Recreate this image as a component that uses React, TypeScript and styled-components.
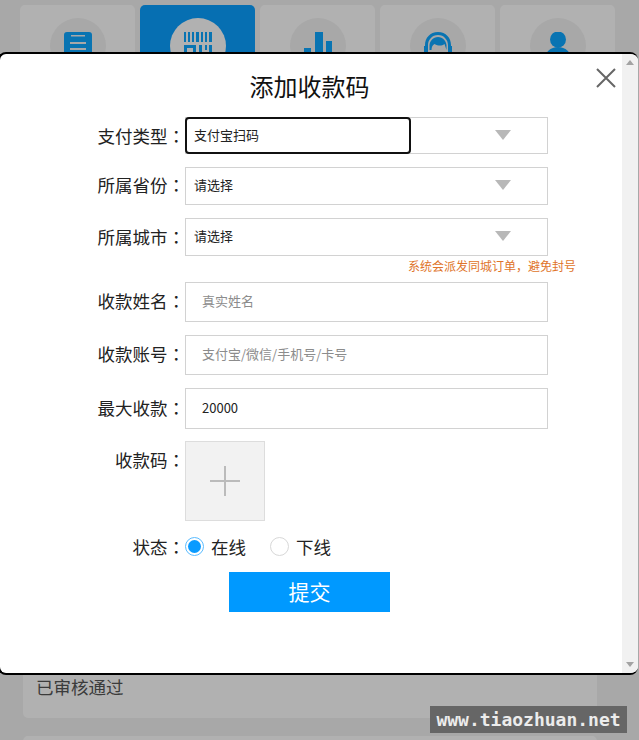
import React from "react";
import styled, { createGlobalStyle } from "styled-components";

const GlobalStyle = createGlobalStyle`
  html, body {
    margin: 0;
    padding: 0;
    height: 100%;
    overflow: hidden;
    background: #f1f1f1;
    font-family: "Noto Sans CJK SC", "Liberation Sans", sans-serif;
    color: #222;
  }
`;

const Page = styled.div`
  position: relative;
  width: 639px;
  height: 740px;
  overflow: hidden;
  box-sizing: border-box;
  padding: 5px 0 0 20px;
`;

const Tabs = styled.div`
  display: grid;
  grid-template-columns: repeat(5, 115px);
  gap: 5px;
`;

const Tab = styled.div<{ $active?: boolean }>`
  height: 110px;
  display: flex;
  justify-content: center;
  padding-top: 13px;
  box-sizing: border-box;
  border-radius: 5px;
  background: ${(p) => (p.$active ? "#0a9fff" : "#fefefe")};
`;

const Circle = styled.div<{ $active?: boolean }>`
  width: 56px;
  height: 56px;
  border-radius: 50%;
  display: flex;
  justify-content: center;
  padding-top: 14px;
  box-sizing: border-box;
  background: ${(p) => (p.$active ? "#fefefe" : "#f1f1f1")};
  color: #0ea6ff;
`;

const Card = styled.div`
  margin: 10px 0 0 3px;
  width: 574px;
  height: 593px;
  box-sizing: border-box;
  background: #fefefe;
  border-radius: 5px;
  display: flex;
  flex-direction: column;
  justify-content: flex-end;
  padding: 0 13px 18px;
  font-size: 17.5px;
  line-height: 26px;
  color: #555;
`;

const NextCard = styled(Card)`
  margin-top: 18px;
  height: 60px;
`;

const Shade = styled.div`
  position: absolute;
  inset: 0;
  background: rgba(0, 0, 0, 0.3);
`;

const Modal = styled.div`
  position: absolute;
  left: -2px;
  top: 52px;
  width: 640px;
  height: 623px;
  box-sizing: border-box;
  display: flex;
  background: #fff;
  border: 2px solid #000;
  border-right: 0;
  border-radius: 8px;
  overflow: hidden;
`;

const Body = styled.div`
  position: relative;
  flex: 1;
  padding-top: 15px;
`;

const Title = styled.h2`
  margin: 0 0 14px;
  height: 34px;
  font-size: 24px;
  line-height: 34px;
  font-weight: 400;
  text-align: center;
  color: #111;
  padding-right: 3px;
`;

const Close = styled.button`
  position: absolute;
  right: 5px;
  top: 13px;
  width: 22px;
  height: 22px;
  padding: 0;
  border: 0;
  background: none;
  color: #666;
`;

const Row = styled.div<{ $top?: number }>`
  display: flex;
  margin-top: ${(p) => p.$top ?? 13}px;
`;

const Label = styled.label<{ $h: number }>`
  width: 185px;
  flex: none;
  font-size: 17.5px;
  line-height: ${(p) => p.$h}px;
  text-align: right;
  color: #222;
`;

// the colon sits centred in its cell in the reference, as the TC glyph does
const Colon = styled.span`
  font-family: "Noto Sans CJK TC", sans-serif;
`;

const Field = styled.div<{ $h: number }>`
  width: 363px;
  height: ${(p) => p.$h}px;
  box-sizing: border-box;
  border: 1px solid #d2d2d2;
  display: flex;
  align-items: center;
  font-size: 13px;
  color: #222;
`;

const Focused = styled.div`
  align-self: stretch;
  margin: -1px 0 -1px -1px;
  width: 226px;
  box-sizing: border-box;
  border: 2px solid #111;
  border-radius: 4px;
  display: flex;
  align-items: center;
  padding: 0 0 2px 7px;
`;

const Value = styled.span`
  padding: 0 0 3px 8px;
`;

const Arrow = styled.i`
  margin: -2px 36px 0 auto;
  width: 0;
  height: 0;
  border-style: solid;
  border-width: 10px 8px 0;
  border-color: #b8b8b8 transparent transparent;
`;

const Hint = styled.div`
  height: 26px;
  width: 576px;
  box-sizing: border-box;
  text-align: right;
  font-size: 12px;
  line-height: 20px;
  color: #e0742a;
`;

const Input = styled.input<{ $h: number }>`
  width: 363px;
  height: ${(p) => p.$h}px;
  box-sizing: border-box;
  border: 1px solid #d2d2d2;
  padding: 0 16px 3px;
  font: 13px "Noto Sans CJK SC", "Liberation Sans", sans-serif;
  color: #222;
  outline: none;
  &::placeholder {
    color: #8c8c8c;
    opacity: 1;
  }
`;

const Upload = styled.div`
  width: 80px;
  height: 80px;
  box-sizing: border-box;
  border: 1px solid #ddd;
  background: #f2f2f2;
  display: flex;
  align-items: center;
  justify-content: center;
  color: #bbb;
`;

const RadioGroup = styled.div`
  display: flex;
  align-items: center;
  height: 28px;
  padding-bottom: 1px;
  box-sizing: border-box;
  font-size: 17.5px;
  line-height: 24px;
  color: #222;
`;

const Radio = styled.span<{ $on?: boolean; $gap?: number }>`
  width: 19px;
  height: 19px;
  margin-left: ${(p) => p.$gap ?? 0}px;
  margin-right: 7px;
  border-radius: 50%;
  box-sizing: border-box;
  border: 1px solid ${(p) => (p.$on ? "#5bbcff" : "#d8d8d8")};
  display: flex;
  align-items: center;
  justify-content: center;
  &::after {
    content: "";
    width: 13px;
    height: 13px;
    border-radius: 50%;
    background: ${(p) => (p.$on ? "#0a9bff" : "transparent")};
  }
`;

const Submit = styled.button`
  display: block;
  margin: 11px 0 0 229px;
  width: 161px;
  height: 40px;
  padding: 0 0 2px;
  border: 0;
  background: #0099ff;
  color: #fff;
  font: 21px "Noto Sans CJK SC", "Liberation Sans", sans-serif;
`;

const ScrollBar = styled.div`
  width: 16px;
  flex: none;
  background: #f1f1f1;
  display: flex;
  flex-direction: column;
  justify-content: space-between;
  align-items: center;
  padding: 6px 0;
  box-sizing: border-box;
`;

const ScrollArrow = styled.i<{ $down?: boolean }>`
  width: 0;
  height: 0;
  border-style: solid;
  border-width: ${(p) => (p.$down ? "5px 4px 0" : "0 4px 5px")};
  border-color: ${(p) =>
    p.$down
      ? "#a3a3a3 transparent transparent"
      : "transparent transparent #a3a3a3"};
`;

const Watermark = styled.div`
  position: absolute;
  left: 430px;
  top: 706px;
  width: 197px;
  height: 27px;
  background: #666;
  color: #ececec;
  font: bold 18px/27px "DejaVu Sans Mono", monospace;
  text-align: center;
  white-space: nowrap;
`;

const ClipboardIcon = () => (
  <svg width="28" height="42" viewBox="0 0 28 42" fill="currentColor">
    <rect width="28" height="42" rx="3" />
    <path d="M7 3h14v1.500H7zM6 10h16v2H6zM6 16h16v2H6z" fill="#f1f1f1" />
  </svg>
);

const BarcodeIcon = () => (
  <svg width="28" height="42" viewBox="0 0 28 42" fill="currentColor">
    <path d="M0 0h2v10H0zM4 0h2v10H4zM8 0h2v10H8zM12 0h3v10h-3zM17 0h2v10h-2zM21 0h2v10h-2zM25 0h3v10h-3z" />
    <path d="M0 13h12v12H0zm3 3v6h6v-6zM15 13h3v8h-3zM21 13h2v5h-2zM25 13h3v12h-3z" fillRule="evenodd" />
  </svg>
);

const BarsIcon = () => (
  <svg width="28" height="42" viewBox="0 0 28 42" fill="currentColor">
    <path d="M0 16h7v26H0zM11 0h8v42h-8zM22 9h6v33h-6z" />
  </svg>
);

const HeadsetIcon = () => (
  <svg width="28" height="42" viewBox="0 0 28 42" fill="currentColor">
    <path d="M14 0C6 0 1 6 1 13v1h3v-1C4 8 8 3 14 3s10 5 10 10v1h3v-1C27 6 22 0 14 0z" />
    <path d="M0 14h4v8H0zM24 14h4v8h-4z" />
    <path d="M14 5C9 5 6 9 5.500 13v5l2 0c0-3 1-5 3-6 4 2 7 2 10 0l2 6V13C22 9 19 5 14 5z" />
  </svg>
);

const PersonIcon = () => (
  <svg width="28" height="42" viewBox="0 0 28 42" fill="currentColor">
    <circle cx="14" cy="7.500" r="8" />
    <path d="M0 30C0 20 7 15 14 15s14 5 14 15v12H0z" />
  </svg>
);

const tabIcons = [ClipboardIcon, BarcodeIcon, BarsIcon, HeadsetIcon, PersonIcon];

const App = () => {
  return (
    <Page>
      <GlobalStyle />
      <Tabs>
        {tabIcons.map((Icon, i) => (
          <Tab key={i} $active={i === 1}>
            <Circle $active={i === 1}>
              <Icon />
            </Circle>
          </Tab>
        ))}
      </Tabs>
      <Card>已审核通过</Card>
      <NextCard />
      <Shade />

      <Modal>
        <Body>
          <Title>添加收款码</Title>
          <Close aria-label="关闭">
            <svg width="22" height="22" viewBox="0 0 22 22" stroke="currentColor" strokeWidth="2">
              <path d="M2 2l18 18M20 2L2 20" />
            </svg>
          </Close>
          <Row $top={0}>
            <Label $h={37}>支付类型<Colon>：</Colon></Label>
            <Field $h={37}>
              <Focused>支付宝扫码</Focused>
              <Arrow />
            </Field>
          </Row>
          <Row>
            <Label $h={36}>所属省份<Colon>：</Colon></Label>
            <Field $h={38}>
              <Value>请选择</Value>
              <Arrow />
            </Field>
          </Row>
          <Row>
            <Label $h={37}>所属城市<Colon>：</Colon></Label>
            <Field $h={38}>
              <Value>请选择</Value>
              <Arrow />
            </Field>
          </Row>
          <Hint>系统会派发同城订单，避免封号</Hint>
          <Row $top={0}>
            <Label $h={38}>收款姓名<Colon>：</Colon></Label>
            <Input $h={40} placeholder="真实姓名" />
          </Row>
          <Row>
            <Label $h={38}>收款账号<Colon>：</Colon></Label>
            <Input $h={40} placeholder="支付宝/微信/手机号/卡号" />
          </Row>
          <Row>
            <Label $h={39}>最大收款<Colon>：</Colon></Label>
            <Input $h={41} defaultValue="20000" />
          </Row>
          <Row $top={12}>
            <Label $h={38}>收款码<Colon>：</Colon></Label>
            <Upload>
              <svg width="30" height="30" viewBox="0 0 30 30" stroke="currentColor" strokeWidth="2">
                <path d="M0 15h30M15 0v30" />
              </svg>
            </Upload>
          </Row>
          <Row $top={12}>
            <Label $h={27}>状态<Colon>：</Colon></Label>
            <RadioGroup>
              <Radio $on />
              在线
              <Radio $gap={24} />
              下线
            </RadioGroup>
          </Row>
          <Submit>提交</Submit>
        </Body>
        <ScrollBar>
          <ScrollArrow />
          <ScrollArrow $down />
        </ScrollBar>
      </Modal>

      <Watermark>www.tiaozhuan.net</Watermark>
    </Page>
  );
};

export default App;
